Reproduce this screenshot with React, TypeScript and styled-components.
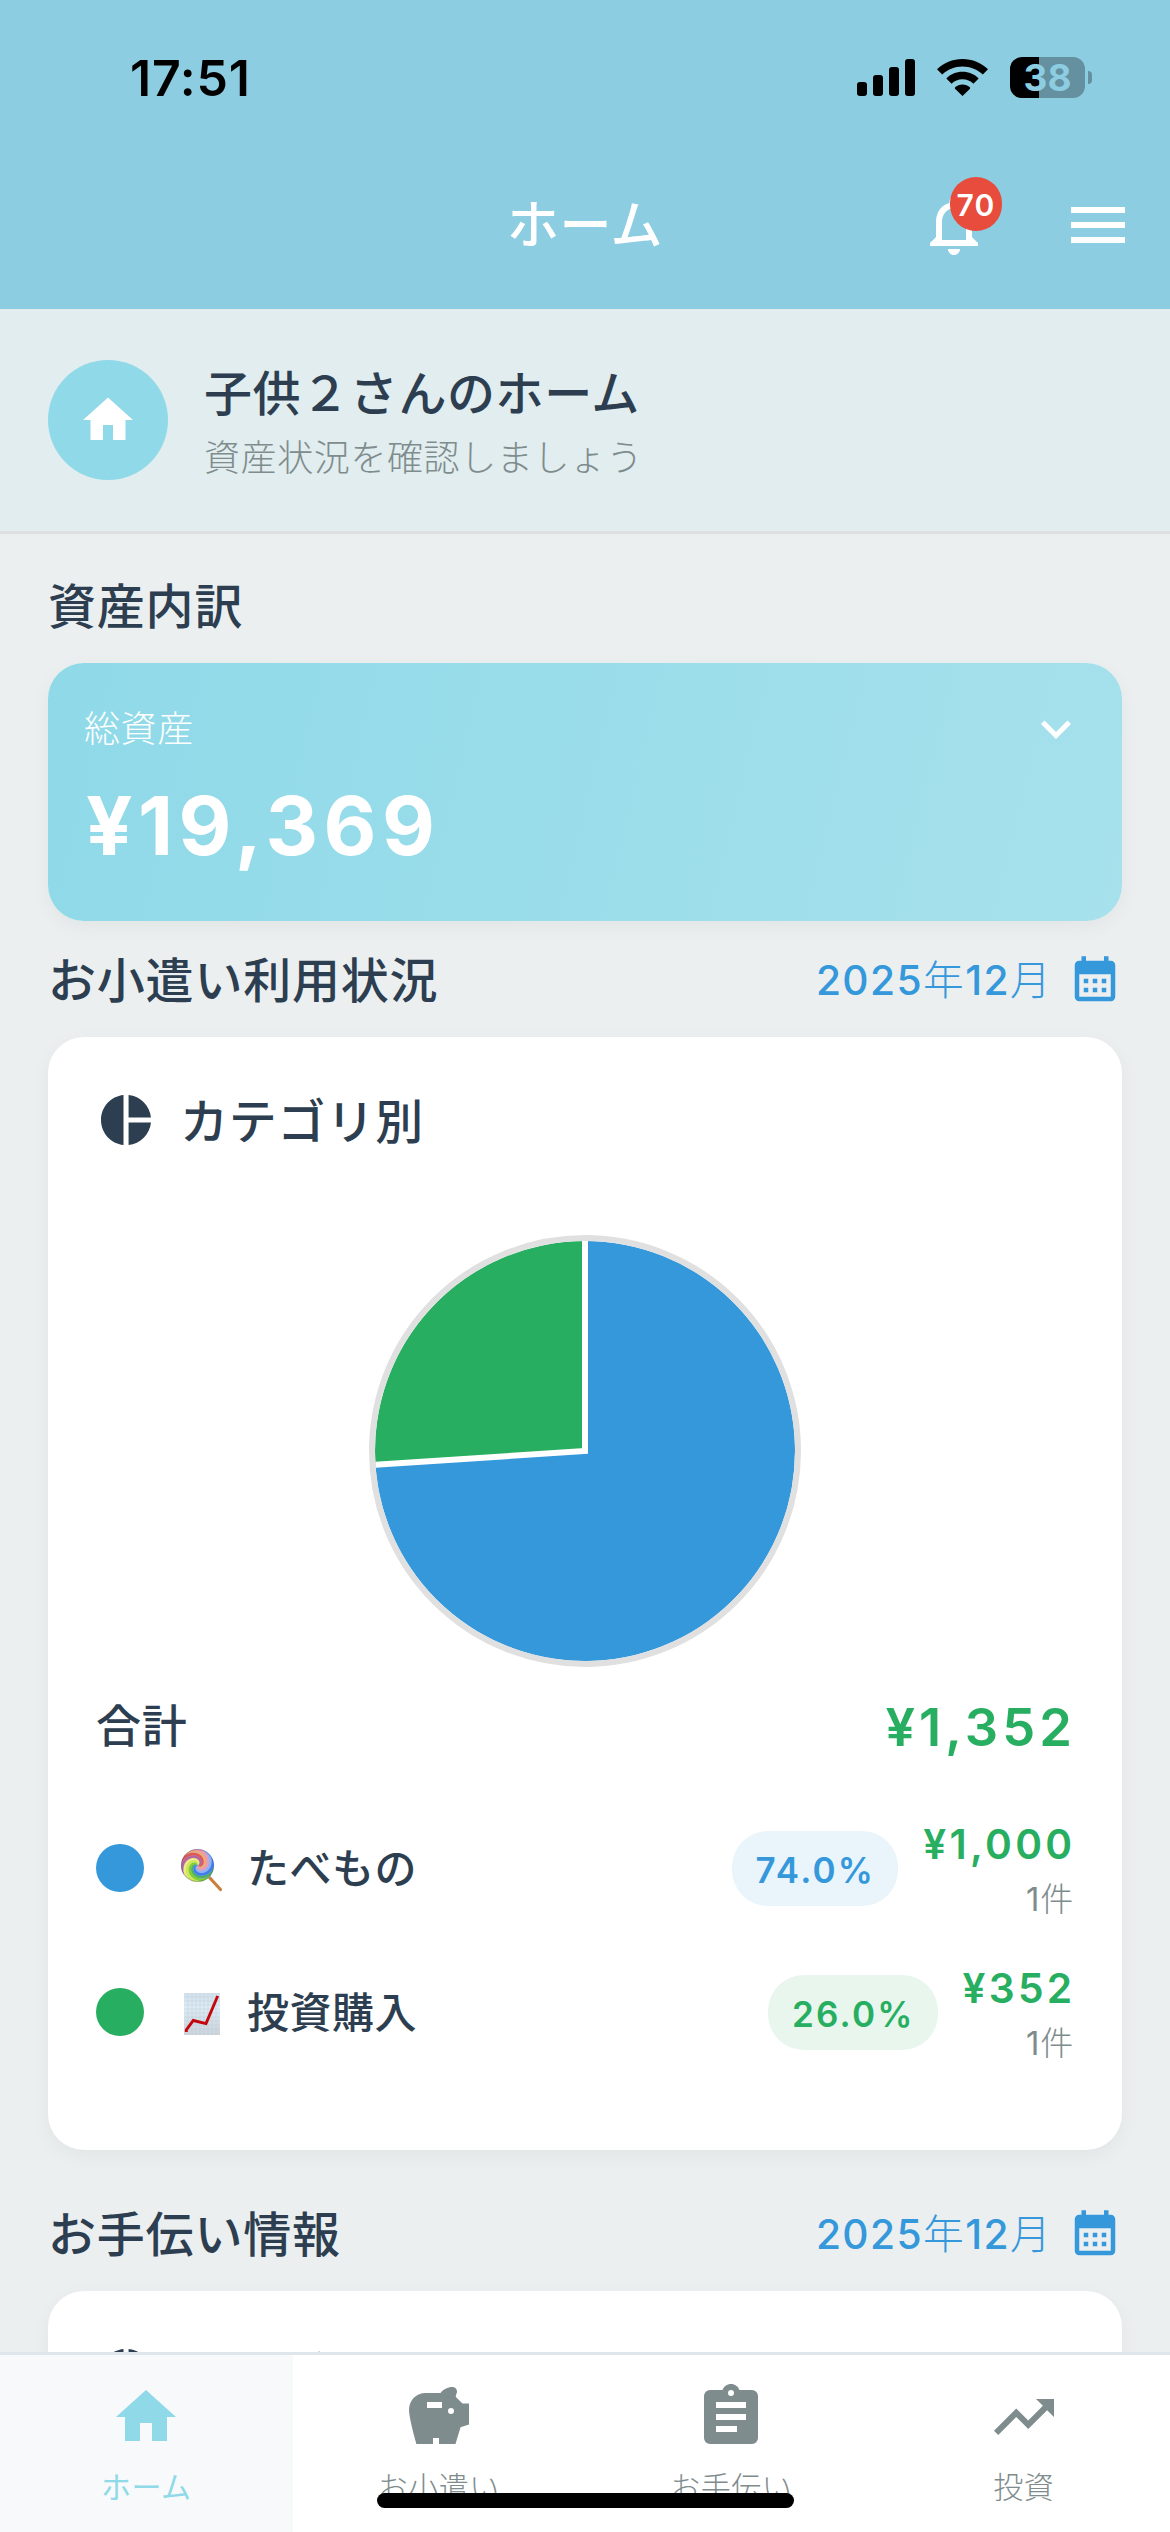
import React from "react";
import styled, { createGlobalStyle, css } from "styled-components";

const color = {
  header: "#8ccde1",
  sky: "#8fd9e8",
  ink: "#2c3e50",
  grey: "#7f8c8d",
  blue: "#3498db",
  green: "#27ae60",
  page: "#ebeff0",
};

const GlobalStyle = createGlobalStyle`
  * { box-sizing: border-box; }
  html, body { margin: 0; padding: 0; background: ${color.page}; }
  body {
    font-family: Inter, "Noto Sans CJK JP", sans-serif;
    color: ${color.ink};
    -webkit-font-smoothing: antialiased;
  }
`;

const Screen = styled.div`
  width: 1170px;
  height: 2532px;
  overflow: hidden;
  display: flex;
  flex-direction: column;
  background: ${color.page};
`;

const Icon = styled.svg<{ $size: number }>`
  display: block;
  flex: none;
  width: ${(p) => p.$size}px;
  height: ${(p) => p.$size}px;
  fill: currentColor;
`;

const Glyph = ({ d, size }: { d: string; size: number }) => (
  <Icon $size={size} viewBox="0 0 24 24" aria-hidden>
    <path d={d} fillRule="evenodd" />
  </Icon>
);

const icons = {
  bell: "M12 22c1.1 0 2-.9 2-2h-4c0 1.1.9 2 2 2zm6-6v-5c0-3.07-1.63-5.64-4.5-6.32V4c0-.83-.67-1.5-1.5-1.5s-1.5.67-1.5 1.5v.68C7.64 5.36 6 7.92 6 11v5l-2 2v1h16v-1l-2-2zm-2 1H8v-6c0-2.48 1.51-4.5 4-4.5s4 2.02 4 4.5v6z",
  menu: "M3 18h18v-2H3v2zm0-5h18v-2H3v2zm0-7v2h18V6H3z",
  home: "M10 20v-6h4v6h5v-8h3L12 3 2 12h3v8z",
  chevron: "M7.41 8.59 12 13.17l4.59-4.58L18 10l-6 6-6-6z",
  calendar:
    "M7 11H9V13H7V11M21 5V19C21 20.11 20.11 21 19 21H5C3.89 21 3 20.1 3 19V5C3 3.9 3.9 3 5 3H6V1H8V3H16V1H18V3H19C20.11 3 21 3.9 21 5M5 19H19V9H5V19M15 13V11H17V13H15M11 13V11H13V13H11M7 15H9V17H7V15M15 17V15H17V17H15M11 17V15H13V17H11Z",
  pie: "M11 2v20c-5.07-.5-9-4.79-9-10s3.93-9.5 9-10zm2.03 0v8.99H22c-.47-4.74-4.24-8.52-8.97-8.99zm0 11.01V22c4.74-.47 8.5-4.25 8.97-8.99h-8.97z",
  piggy:
    "M15,10A1,1 0 0,1 16,9A1,1 0 0,1 17,10A1,1 0 0,1 16,11A1,1 0 0,1 15,10M22,7.5V14.47L19.18,15.41L17.5,21H12V19H10V21H4.5C4.5,21 2,12.54 2,9.5A5.5,5.5 0 0,1 7.5,4H12.5C13.41,2.79 14.86,2 16.5,2A1.5,1.5 0 0,1 18,3.5C18,3.71 17.96,3.9 17.88,4.08C17.74,4.42 17.62,4.81 17.56,5.23L19.83,7.5H22M13,7H8V9H13V7Z",
  clipboard:
    "M17,9H7V7H17M17,13H7V11H17M14,17H7V15H14M12,3A1,1 0 0,1 13,4A1,1 0 0,1 12,5A1,1 0 0,1 11,4A1,1 0 0,1 12,3M19,3H14.82C14.4,1.84 13.3,1 12,1C10.7,1 9.6,1.84 9.18,3H5A2,2 0 0,0 3,5V19A2,2 0 0,0 5,21H19A2,2 0 0,0 21,19V5A2,2 0 0,0 19,3Z",
  trend: "M16 6l2.29 2.29-4.88 4.88-4-4L2 16.59 3.41 18l6-6 4 4 6.3-6.29L22 12V6z",
};

/* ---------- header ---------- */

const Header = styled.header`
  flex: none;
  height: 309px;
  background: ${color.header};
`;

const StatusBar = styled.div`
  display: flex;
  align-items: center;
  justify-content: space-between;
  height: 155px;
  padding: 0 78px 0 130px;
  color: #000;
`;

const Clock = styled.span`
  font-size: 50px;
  line-height: 60px;
  font-weight: 600;
  letter-spacing: 0.8px;
`;

const StatusIcons = styled.div`
  display: flex;
  align-items: center;
  gap: 22px;
`;

const Battery = styled.div`
  display: flex;
  align-items: center;
  gap: 3px;
`;

const BatteryBody = styled.div`
  width: 75px;
  height: 41px;
  border-radius: 12px;
  background: linear-gradient(to right, #000 29px, #64909f 29px);
  color: ${color.header};
  font-size: 37px;
  line-height: 41px;
  font-weight: 700;
  text-align: center;
`;

const BatteryTip = styled.div`
  width: 4px;
  height: 13px;
  border-radius: 0 4px 4px 0;
  background: #64909f;
`;

const NavBar = styled.div`
  display: grid;
  grid-template-columns: 1fr auto 1fr;
  align-items: center;
  height: 140px;
  padding: 0 36px;
  color: #fff;
`;

const NavTitle = styled.h1`
  margin: 0;
  grid-column: 2;
  padding-top: 1px;
  font-size: 52px;
  line-height: 60px;
  font-weight: 500;
  letter-spacing: 0.5px;
`;

const NavActions = styled.div`
  display: flex;
  justify-content: flex-end;
  gap: 72px;
`;

const BellButton = styled.div`
  position: relative;
`;

const Badge = styled.span`
  position: absolute;
  left: 32px;
  top: -12px;
  width: 52px;
  height: 54px;
  border-radius: 27px;
  background: #e74c3c;
  font-size: 30px;
  line-height: 56px;
  font-weight: 600;
  letter-spacing: 1.3px;
  text-align: center;
`;

/* ---------- greeting ---------- */

const Greeting = styled.section`
  flex: none;
  display: flex;
  align-items: center;
  gap: 36px;
  height: 225px;
  padding: 0 48px;
  background: #e1edef;
  border-bottom: 3px solid #dedfe0;
`;

const Avatar = styled.div`
  display: grid;
  place-items: center;
  width: 120px;
  height: 120px;
  border-radius: 50%;
  background: ${color.sky};
  color: #fff;
`;

const GreetingText = styled.div`
  padding-top: 10px;
`;

const GreetingTitle = styled.h2`
  margin: 0;
  font-size: 48px;
  line-height: 66px;
  font-weight: 500;
  letter-spacing: 0.6px;
`;

const GreetingNote = styled.p`
  margin: 0;
  font-size: 36px;
  line-height: 63px;
  font-weight: 300;
  letter-spacing: 0.6px;
  color: ${color.grey};
`;

/* ---------- sections ---------- */

const SectionHead = styled.div<{ $height: number; $drop: number }>`
  flex: none;
  display: flex;
  align-items: center;
  justify-content: space-between;
  height: ${(p) => p.$height}px;
  padding: ${(p) => p.$drop}px 48px 0;
`;

const heading = css`
  margin: 0;
  font-size: 48px;
  line-height: 60px;
  font-weight: 500;
  letter-spacing: 0.8px;
`;

const SectionTitle = styled.h2`
  ${heading}
`;

const MonthPicker = styled.div`
  display: flex;
  align-items: center;
  gap: 16px;
  font-size: 40.7px;
  line-height: 54px;
  font-weight: 500;
  letter-spacing: 1.4px;
  color: ${color.blue};
`;

const Kanji = styled.span`
  font-weight: 300;
`;

const Month = () => (
  <MonthPicker>
    <span>
      2025<Kanji>年</Kanji>12<Kanji>月</Kanji>
    </span>
    <Glyph d={icons.calendar} size={54} />
  </MonthPicker>
);

const TotalCard = styled.section`
  flex: none;
  height: 258px;
  margin: 0 48px;
  padding: 35px 36px 0;
  border-radius: 36px;
  background: linear-gradient(103.5deg, #8fd9e8, #a6e1ec);
  box-shadow: 0 6px 20px rgba(0, 0, 0, 0.045);
  color: #fff;
`;

const TotalTop = styled.div`
  display: flex;
  align-items: center;
  justify-content: space-between;
  height: 62px;
`;

const TotalLabel = styled.span`
  font-size: 36px;
  line-height: 44px;
  font-weight: 300;
  letter-spacing: 0.6px;
`;

const TotalAmount = styled.div`
  margin-top: 16px;
  padding-left: 2px;
  font-size: 81.5px;
  line-height: 100px;
  font-weight: 700;
  letter-spacing: 5.5px;
`;

const Card = styled.section<{ $height: number }>`
  flex: none;
  height: ${(p) => p.$height}px;
  margin: 0 48px;
  padding: 48px;
  border-radius: 36px;
  background: #fff;
  box-shadow: 0 6px 20px rgba(0, 0, 0, 0.045);
`;

const CardHead = styled.div`
  display: flex;
  align-items: center;
  gap: 24px;
  height: 70px;
`;

const CardTitle = styled.h3`
  ${heading}
  padding-top: 3px;
`;

const Chart = styled.svg`
  display: block;
  width: 432px;
  height: 432px;
  margin: 80px auto 0;
`;

const SumRow = styled.div`
  display: flex;
  align-items: center;
  justify-content: space-between;
  height: 120px;
`;

const SumLabel = styled.span`
  font-size: 45px;
  line-height: 60px;
  font-weight: 500;
  letter-spacing: 0.8px;
`;

const SumAmount = styled.span`
  margin-right: -2px;
  font-size: 52.4px;
  line-height: 60px;
  font-weight: 600;
  letter-spacing: 4.1px;
  color: ${color.green};
`;

const Legend = styled.div`
  display: flex;
  flex-direction: column;
  padding-top: 9px;
`;

const LegendRow = styled.div`
  display: flex;
  align-items: center;
  height: 144px;
`;

const Dot = styled.span<{ $tint: string }>`
  width: 48px;
  height: 48px;
  border-radius: 50%;
  background: ${(p) => p.$tint};
`;

const Emoji = styled.svg`
  width: 48px;
  height: 48px;
  margin: 0 21px 0 34px;
`;

const LegendName = styled.span`
  flex: 1;
  padding-top: 2px;
  font-size: 42px;
  line-height: 54px;
  font-weight: 500;
  letter-spacing: 0.5px;
`;

const Pill = styled.span<{ $tint: string; $bg: string }>`
  padding: 0 23px 0 24px;
  height: 75px;
  border-radius: 36px;
  background: ${(p) => p.$bg};
  color: ${(p) => p.$tint};
  font-size: 35px;
  line-height: 78px;
  font-weight: 600;
  letter-spacing: 2.2px;
`;

const Figures = styled.div`
  display: flex;
  flex-direction: column;
  align-items: flex-end;
  margin-left: 25px;
  padding-top: 9px;
`;

const Amount = styled.span`
  margin-right: -1.5px;
  font-size: 40.7px;
  line-height: 52px;
  font-weight: 600;
  letter-spacing: 3.3px;
  color: ${color.green};
`;

const Count = styled.span`
  font-size: 33px;
  line-height: 56px;
  letter-spacing: 0.8px;
  color: ${color.grey};
`;

/* ---------- tab bar ---------- */

const TabBar = styled.nav`
  position: absolute;
  left: 0;
  top: 2352px;
  display: grid;
  grid-template-columns: repeat(4, 1fr);
  width: 1170px;
  height: 180px;
  border-top: 3px solid #dfe7ec;
  background: #fff;
`;

const Tab = styled.div<{ $active?: boolean }>`
  display: flex;
  flex-direction: column;
  align-items: center;
  padding-top: 26px;
  background: ${(p) => (p.$active ? "#f8f9fb" : "#fff")};
  color: ${(p) => (p.$active ? color.sky : color.grey)};
  font-weight: ${(p) => (p.$active ? 400 : 300)};
  font-size: 30px;
  line-height: 40px;
  letter-spacing: 0.5px;
`;

const TabLabel = styled.span`
  margin-top: 14px;
`;

const HomeIndicator = styled.div`
  position: absolute;
  left: 377px;
  top: 2493px;
  width: 417px;
  height: 15px;
  border-radius: 8px;
  background: #000;
`;

/* ---------- drawings ---------- */

const Signal = () => (
  <svg width="58" height="37" viewBox="0 0 58 37">
    <rect x="0" y="23" width="10" height="14" rx="3" />
    <rect x="16" y="16" width="10" height="21" rx="3" />
    <rect x="32" y="8" width="10" height="29" rx="3" />
    <rect x="48" y="0" width="10" height="37" rx="3" />
  </svg>
);

const Wifi = () => (
  <svg width="51" height="37" viewBox="0 0 51 37">
    <path d="M25.5 0C15.600 0 6.600 3.900 0 10.300L5.200 15.600C10.500 10.500 17.600 7.500 25.500 7.500S40.500 10.500 45.800 15.600L51 10.300C44.400 3.900 35.400 0 25.500 0Z" />
    <path d="M25.500 12.800C19.200 12.800 13.500 15.300 9.300 19.400L14.600 24.700C17.400 22 21.300 20.300 25.500 20.300S33.600 22 36.400 24.700L41.700 19.400C37.500 15.300 31.800 12.800 25.500 12.800Z" />
    <path d="M25.500 25.500C22.600 25.500 20 26.700 18 28.600Q17.600 29.200 18 29.700L25.500 37L33 29.700Q33.400 29.200 33 28.600C31 26.700 28.400 25.500 25.500 25.500Z" />
  </svg>
);

const slices = [
  { value: 1000, tint: color.blue },
  { value: 352, tint: color.green },
];

const PieChart = () => {
  const total = slices.reduce((sum, s) => sum + s.value, 0);
  const point = (share: number) => {
    const a = share * Math.PI * 2;
    return `${216 + 210 * Math.sin(a)} ${216 - 210 * Math.cos(a)}`;
  };
  let start = 0;
  return (
    <Chart viewBox="0 0 432 432">
      {slices.map((s) => {
        const from = start;
        start += s.value / total;
        const large = start - from > 0.5 ? 1 : 0;
        return (
          <path
            key={s.tint}
            fill={s.tint}
            d={`M216 216L${point(from)}A210 210 0 ${large} 1 ${point(start)}Z`}
          />
        );
      })}
      <path
        d={`M${point(0)}L216 216L${point(slices[0].value / total)}`}
        fill="none"
        stroke="#fff"
        strokeWidth="6"
      />
      <circle cx="216" cy="216" r="213" fill="none" stroke="#e0e0e0" strokeWidth="6" />
    </Chart>
  );
};

/* Candy colours, clockwise along the rim starting from the right-hand side. */
const candy = [
  "#4fae6a",
  "#7fcf2e",
  "#cdec4c",
  "#f1ec7c",
  "#b565a0",
  "#e4574c",
  "#f3a878",
  "#ee9bb0",
  "#8fb2f6",
  "#3f7cf0",
];

/* One edge of a candy stripe: it turns clockwise as it nears the middle. */
const swirlEdge = (index: number) =>
  Array.from({ length: 15 }, (_, i) => {
    const r = i / 14;
    const a = (index / candy.length) * Math.PI * 2 + Math.PI * 1.15 * (1 - r);
    return `${(19.5 + 16.5 * r * Math.cos(a)).toFixed(2)} ${(21.5 + 16.5 * r * Math.sin(a)).toFixed(2)}`;
  });

const Lollipop = () => (
  <Emoji viewBox="0 0 48 48">
    <path d="M31 33L42.500 45.500" stroke="#c9803f" strokeWidth="3.200" strokeLinecap="round" />
    <circle cx="19.500" cy="21.500" r="16.500" fill="#8fb2f6" />
    {candy.map((tint, i) => (
      <path
        key={tint}
        d={`M${swirlEdge(i).join("L")}A16.500 16.500 0 0 1 ${swirlEdge(i + 1).reverse().join("L")}Z`}
        fill={tint}
      />
    ))}
    <circle cx="19.500" cy="21.500" r="16" fill="none" stroke="#4a4f8a" strokeOpacity="0.35" />
  </Emoji>
);

const StockChart = () => (
  <Emoji viewBox="0 0 48 48">
    <defs>
      <linearGradient id="paper" x1="0" y1="0" x2="0" y2="1">
        <stop offset="0" stopColor="#d3e1ec" />
        <stop offset="0.35" stopColor="#dcebf4" />
        <stop offset="1" stopColor="#ccd3db" />
      </linearGradient>
    </defs>
    <rect x="6" y="5" width="36" height="42" fill="url(#paper)" />
    <path
      d="M10 5V47M14 5V47M18 5V47M22 5V47M26 5V47M30 5V47M34 5V47M38 5V47M6 9H42M6 13H42M6 17H42M6 21H42M6 25H42M6 29H42M6 33H42M6 37H42M6 41H42"
      stroke="#b9c8d4"
      strokeOpacity="0.55"
      strokeWidth="0.700"
    />
    <path d="M8.300 44V42L15.300 32.500L28 35.600L39.700 8" fill="none" stroke="#c4070c" strokeWidth="2.900" />
  </Emoji>
);

const rows = [
  { name: "たべもの", share: "74.0%", amount: "¥1,000", tint: color.blue, bg: "#e9f4fb", art: <Lollipop /> },
  { name: "投資購入", share: "26.0%", amount: "¥352", tint: color.green, bg: "#e8f6ee", art: <StockChart /> },
];

const tabs = [
  { label: "ホーム", icon: icons.home },
  { label: "お小遣い", icon: icons.piggy },
  { label: "お手伝い", icon: icons.clipboard },
  { label: "投資", icon: icons.trend },
];

const CategoryHead = () => (
  <CardHead>
    <Glyph d={icons.pie} size={60} />
    <CardTitle>カテゴリ別</CardTitle>
  </CardHead>
);

export default function App() {
  return (
    <Screen>
      <GlobalStyle />
      <Header>
        <StatusBar>
          <Clock>17:51</Clock>
          <StatusIcons>
            <Signal />
            <Wifi />
            <Battery>
              <BatteryBody>38</BatteryBody>
              <BatteryTip />
            </Battery>
          </StatusIcons>
        </StatusBar>
        <NavBar>
          <NavTitle>ホーム</NavTitle>
          <NavActions>
            <BellButton>
              <Glyph d={icons.bell} size={72} />
              <Badge>70</Badge>
            </BellButton>
            <Glyph d={icons.menu} size={72} />
          </NavActions>
        </NavBar>
      </Header>

      <Greeting>
        <Avatar>
          <Glyph d={icons.home} size={60} />
        </Avatar>
        <GreetingText>
          <GreetingTitle>子供２さんのホーム</GreetingTitle>
          <GreetingNote>資産状況を確認しましょう</GreetingNote>
        </GreetingText>
      </Greeting>

      <SectionHead $height={129} $drop={16}>
        <SectionTitle>資産内訳</SectionTitle>
      </SectionHead>
      <TotalCard>
        <TotalTop>
          <TotalLabel>総資産</TotalLabel>
          <Glyph d={icons.chevron} size={60} />
        </TotalTop>
        <TotalAmount>¥19,369</TotalAmount>
      </TotalCard>

      <SectionHead $height={116} $drop={3}>
        <SectionTitle>お小遣い利用状況</SectionTitle>
        <Month />
      </SectionHead>
      <Card $height={1113}>
        <CategoryHead />
        <PieChart />
        <SumRow>
          <SumLabel>合計</SumLabel>
          <SumAmount>¥1,352</SumAmount>
        </SumRow>
        <Legend>
          {rows.map((r) => (
            <LegendRow key={r.name}>
              <Dot $tint={r.tint} />
              {r.art}
              <LegendName>{r.name}</LegendName>
              <Pill $tint={r.tint} $bg={r.bg}>
                {r.share}
              </Pill>
              <Figures>
                <Amount>{r.amount}</Amount>
                <Count>
                  1<Kanji>件</Kanji>
                </Count>
              </Figures>
            </LegendRow>
          ))}
        </Legend>
      </Card>

      <SectionHead $height={141} $drop={28}>
        <SectionTitle>お手伝い情報</SectionTitle>
        <Month />
      </SectionHead>
      <Card $height={400}>
        <CategoryHead />
      </Card>

      <TabBar>
        {tabs.map((t, i) => (
          <Tab key={t.label} $active={i === 0}>
            <Glyph d={t.icon} size={72} />
            <TabLabel>{t.label}</TabLabel>
          </Tab>
        ))}
      </TabBar>
      <HomeIndicator />
    </Screen>
  );
}
